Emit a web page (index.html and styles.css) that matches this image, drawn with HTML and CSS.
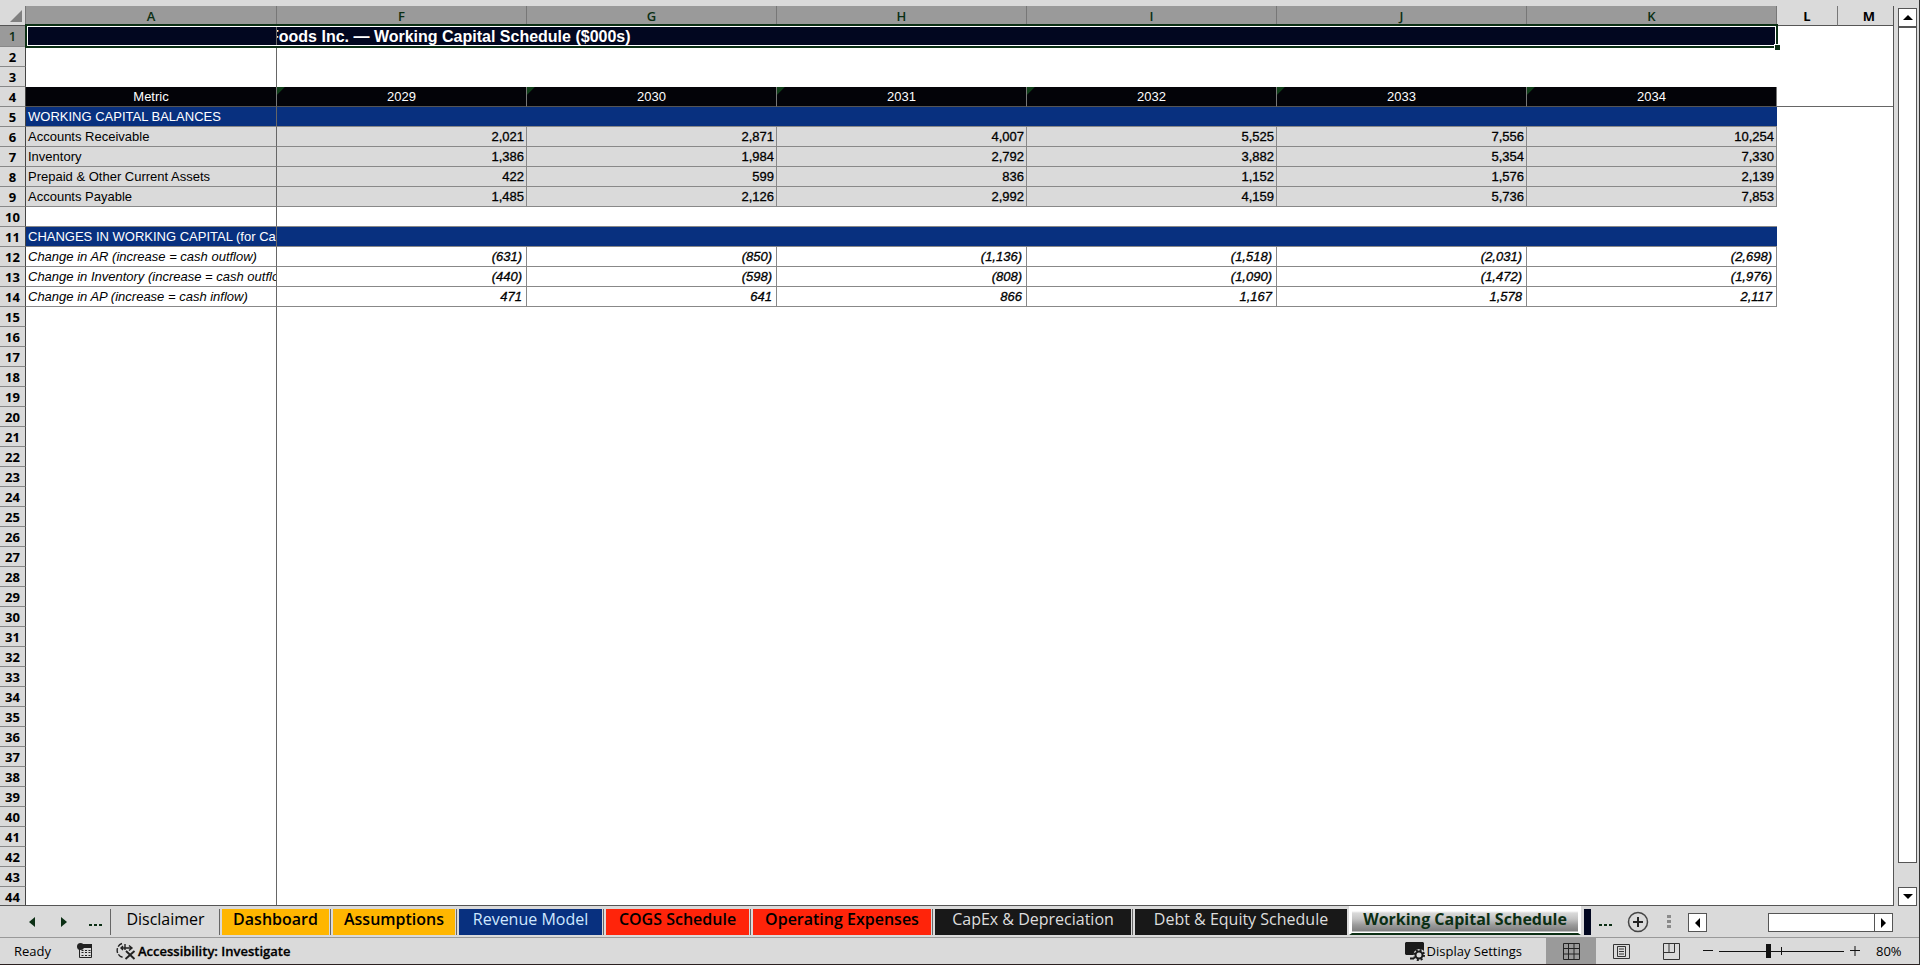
FILE: index.html
```html
<!DOCTYPE html>
<html lang="en">
<head>
<meta charset="utf-8">
<title>Working Capital Schedule</title>
<link rel="stylesheet" href="styles.css">
</head>
<body>
<div class="app">
  <main class="workspace">
    <div class="sheet">
      <table class="grid">
        <colgroup><col class="col-num"><col class="col-a"><col class="col-year"><col class="col-year"><col class="col-year"><col class="col-year"><col class="col-year"><col class="col-year"><col class="col-l"><col></colgroup>
        <thead>
          <tr><th class="corner"><svg width="12" height="12" viewBox="0 0 12 12"><path d="M12 0V12H0Z" fill="#808080"/></svg></th><th class="sel">A</th><th class="sel">F</th><th class="sel">G</th><th class="sel">H</th><th class="sel">I</th><th class="sel">J</th><th class="sel">K</th><th>L</th><th class="last">M</th></tr>
        </thead>
        <tbody id="rows">
          <tr class="title"><th class="sel">1</th><td></td><td colspan="6" class="title-text">Foods Inc. — Working Capital Schedule ($000s)</td></tr>
          <tr><th>2</th><td></td></tr>
          <tr><th>3</th><td></td></tr>
          <tr class="years"><th>4</th><td>Metric</td><td>2029</td><td>2030</td><td>2031</td><td>2032</td><td>2033</td><td>2034</td><td class="freeze" colspan="2"></td></tr>
          <tr class="section"><th>5</th><td>WORKING CAPITAL BALANCES</td><td colspan="6"></td></tr>
          <tr class="balance"><th>6</th><td>Accounts Receivable</td><td>2,021</td><td>2,871</td><td>4,007</td><td>5,525</td><td>7,556</td><td>10,254</td></tr>
          <tr class="balance"><th>7</th><td>Inventory</td><td>1,386</td><td>1,984</td><td>2,792</td><td>3,882</td><td>5,354</td><td>7,330</td></tr>
          <tr class="balance"><th>8</th><td>Prepaid &amp; Other Current Assets</td><td>422</td><td>599</td><td>836</td><td>1,152</td><td>1,576</td><td>2,139</td></tr>
          <tr class="balance"><th>9</th><td>Accounts Payable</td><td>1,485</td><td>2,126</td><td>2,992</td><td>4,159</td><td>5,736</td><td>7,853</td></tr>
          <tr class="spacer"><th>10</th><td></td><td colspan="6"></td></tr>
          <tr class="section"><th>11</th><td>CHANGES IN WORKING CAPITAL (for Cash Flow)</td><td colspan="6"></td></tr>
          <tr class="change"><th>12</th><td>Change in AR (increase = cash outflow)</td><td>(631)</td><td>(850)</td><td>(1,136)</td><td>(1,518)</td><td>(2,031)</td><td>(2,698)</td></tr>
          <tr class="change"><th>13</th><td>Change in Inventory (increase = cash outflow)</td><td>(440)</td><td>(598)</td><td>(808)</td><td>(1,090)</td><td>(1,472)</td><td>(1,976)</td></tr>
          <tr class="change"><th>14</th><td>Change in AP (increase = cash inflow)</td><td>471</td><td>641</td><td>866</td><td>1,167</td><td>1,578</td><td>2,117</td></tr>
        </tbody>
      </table>
      <div class="selection"><i class="handle"></i></div>
    </div>
    <div class="vscroll">
      <button class="arrow" aria-label="Scroll up"><svg width="10" height="5" viewBox="0 0 10 5"><path d="M5 0L10 5H0Z"/></svg></button>
      <div class="vthumb"></div>
      <button class="arrow down" aria-label="Scroll down"><svg width="10" height="5" viewBox="0 0 10 5"><path d="M0 0H10L5 5Z"/></svg></button>
    </div>
  </main>

  <nav class="tabs">
    <div class="tab-nav">
      <button aria-label="Previous sheet"><svg width="6" height="10" viewBox="0 0 6 10"><path d="M6 0V10L0 5Z"/></svg></button>
      <button aria-label="Next sheet"><svg width="6" height="10" viewBox="0 0 6 10"><path d="M0 0V10L6 5Z"/></svg></button>
      <button class="more" aria-label="More sheets"><svg width="13" height="2" viewBox="0 0 13 2"><path d="M0 0h3v2H0zM5 0h3v2H5zM10 0h3v2h-3z"/></svg></button>
    </div>
    <button class="tab plain w-disclaimer">Disclaimer</button>
    <button class="tab amber w-dashboard">Dashboard</button>
    <button class="tab amber w-assumptions">Assumptions</button>
    <button class="tab blue w-revenue">Revenue Model</button>
    <button class="tab red w-revenue">COGS Schedule</button>
    <button class="tab red w-opex">Operating Expenses</button>
    <button class="tab dark w-capex">CapEx &amp; Depreciation</button>
    <button class="tab dark w-debt">Debt &amp; Equity Schedule</button>
    <button class="tab active">Working Capital Schedule</button>
    <span class="sliver"></span>
    <button class="more-right" aria-label="More sheets"><svg width="13" height="2" viewBox="0 0 13 2"><path d="M0 0h3v2H0zM5 0h3v2H5zM10 0h3v2h-3z"/></svg></button>
    <button class="add" aria-label="New sheet"><svg width="22" height="22" viewBox="0 0 22 22" fill="none" stroke="#444"><circle cx="11" cy="11" r="9.5" stroke-width="1.5"/><path d="M11 6V16M6 11H16" stroke-width="2" stroke="#222"/></svg></button>
    <span class="grip"><svg width="4" height="14" viewBox="0 0 4 14"><path d="M0 0h4v3H0zM0 5h4v3H0zM0 10h4v3H0z" fill="#8a8a8a"/></svg></span>
    <div class="hscroll">
      <button class="arrow" aria-label="Scroll left"><svg width="5" height="10" viewBox="0 0 5 10"><path d="M5 0V10L0 5Z"/></svg></button>
      <div class="hthumb"></div>
      <button class="arrow" aria-label="Scroll right"><svg width="5" height="10" viewBox="0 0 5 10"><path d="M0 0V10L5 5Z"/></svg></button>
    </div>
  </nav>

  <footer class="status">
    <span class="ready">Ready</span>
    <button class="macro" aria-label="Record macro"><svg width="16" height="16" viewBox="0 0 16 16"><path d="M2.500 6V14.500H14.500V2" fill="none" stroke="#222"/><path d="M6 1H15V5H6Z" fill="#222"/><circle cx="3.500" cy="3.500" r="3.500" fill="#222"/><path d="M4.500 7.500h9M4.500 9.500h9M4.500 12.500h9" stroke="#222" stroke-dasharray="2 1.500"/></svg></button>
    <button class="access"><svg width="20" height="18" viewBox="0 0 20 18" fill="none" stroke="#222" stroke-width="1.400"><path d="M6 1.500A7.200 7.200 0 0 0 8 15.500" stroke-dasharray="5 1.500"/><path d="M5 6H16M9 2V8M13 3.500l3 2.500-3 2.500M7 4l-2 2 2 2"/><path d="M10 9L18.500 17M18.500 9L9.500 17" stroke-width="1.900"/></svg><b>Accessibility: Investigate</b></button>
    <button class="display"><svg width="20" height="19" viewBox="0 0 20 19"><path d="M1 0H18L19 1V9A6 6 0 0 0 8.500 13H1L0 12V1Z" fill="#1a1a1a"/><path d="M5 16.500H9" stroke="#1a1a1a" stroke-width="2"/><circle cx="14" cy="13" r="3.500" fill="none" stroke="#1a1a1a" stroke-width="2"/><circle cx="14" cy="13" r="5" fill="none" stroke="#1a1a1a" stroke-width="2" stroke-dasharray="2 1.930"/></svg>Display Settings</button>
    <button class="view on" aria-label="Normal"><svg width="17" height="17" viewBox="0 0 17 17" fill="none" stroke="#222"><path d="M.500 .500H16.500V16.500H.500ZM5.500 .500V16.500M11 .500V16.500M.500 5.500H16.500M.500 11H16.500"/></svg></button>
    <button class="view" aria-label="Page layout"><svg width="17" height="17" viewBox="0 0 17 17" fill="none" stroke="#333"><path d="M.500 1.500H16.500V15.500H.500ZM4.500 3.500H12.500V13.500H4.500ZM6 6H11M6 8.500H11M6 11H11"/></svg></button>
    <button class="view" aria-label="Page break preview"><svg width="17" height="17" viewBox="0 0 17 17" fill="none" stroke="#333"><path d="M.500 .500H16.500V16.500H.500ZM.500 9.500H11.500V.500M6 .500V9.500"/></svg></button>
    <div class="zoom">
      <button aria-label="Zoom out"><svg width="10" height="10" viewBox="0 0 10 10"><path d="M0 4.500H10" stroke="#111"/></svg></button>
      <input class="range" type="range" min="0" max="100" value="39" aria-label="Zoom level">
      <button aria-label="Zoom in"><svg width="10" height="10" viewBox="0 0 10 10"><path d="M0 4.500H10M5 0V10" stroke="#111"/></svg></button>
    </div>
    <span class="pct">80%</span>
  </footer>
</div>
<script src="rows.js"></script>
</body>
</html>
```
FILE: rows.js
```js
// Fill the sheet with blank rows below the data.
const body = document.getElementById("rows");
for (let n = 15; n <= 44; n++) {
  const row = body.insertRow();
  const head = document.createElement("th");
  head.textContent = n;
  row.append(head);
  row.insertCell();
}
```
FILE: styles.css
```css
* { box-sizing: border-box; }
body { margin: 0; font-family: "Open Sans", "Noto Sans", sans-serif; font-size: 12px; color: #000; background: #dadada; }
button { font: inherit; color: inherit; background: none; border: 0; padding: 0; margin: 0; display: flex; align-items: center; justify-content: center; flex: none; }
svg { display: block; flex: none; }
.app { display: flex; flex-direction: column; height: 100vh; overflow: hidden; border-right: 1px solid #333; border-bottom: 1px solid #2a2020; }
.workspace { flex: 1; min-height: 0; display: flex; padding-top: 6px; }
.sheet { position: relative; flex: 1; min-width: 0; overflow: hidden; border-right: 1px solid #555; border-bottom: 1px solid #555; background: #fff; }

.grid { table-layout: fixed; width: 100%; border-collapse: separate; border-spacing: 0; font-family: "Liberation Sans", Arial, sans-serif; font-size: 13px; }
.col-num { width: 26px; }
.col-a { width: 251px; }
.col-year { width: 250px; }
.col-l { width: 61px; }
.grid tr { height: 20px; }
.grid th, .grid td { padding: 0; line-height: 18px; white-space: nowrap; overflow: hidden; }
.grid th { font-family: "Open Sans", "Noto Sans", sans-serif; font-size: 13px; font-weight: 700; background: #dadada; text-align: center; border-right: 1px solid #444; border-bottom: 1px solid #888; }
.grid thead tr { height: 20px; }
.grid thead th { border-right: 1px solid #777; border-bottom: 1px solid #555; }
.grid thead .sel { background: #9a9a9a; color: #0b2f14; font-weight: 600; }
.grid thead .last { border-right: 0; padding-left: 7px; }
.grid thead .corner svg { margin: 0 3px 0 auto; }
.grid tbody .sel { background: #9a9a9a; color: #0b2f14; font-weight: 600; }
.grid td:nth-child(2) { border-right: 1px solid #666; }
.grid .title { height: 21px; }
.title td { background: #020720; color: #fff; }
.grid .title-text { font-size: 16px; font-weight: 700; text-indent: -8px; }
.grid .years td { background: #030308; color: #fff; text-align: center; border-right: 1px solid #777; border-bottom: 1px solid #555; }
.grid .years td:nth-child(n+3) { background: linear-gradient(135deg, #0f3d18 5px, #030308 6px); }
.grid .years .freeze:nth-child(n+3) { background: none; border-right: 0; border-bottom: 1px solid #666; }
.grid .section td { background: #08307f; color: #fff; border-bottom: 1px solid #888; padding-left: 2px; }
.balance td { background: #dadada; }
.balance td, .change td { border-right: 1px solid #888; border-bottom: 1px solid #888; text-align: right; }
.balance td:nth-child(n+3), .change td:nth-child(n+3) { padding-right: 2px; -webkit-text-stroke: 0.3px #000; }
.grid .balance td:nth-child(2), .grid .change td:nth-child(2) { text-align: left; padding-left: 2px; }
.change td { font-style: italic; }
.grid .change td:nth-child(n+3) { padding-right: 4px; }
.spacer td:nth-child(n+2) { border-bottom: 1px solid #888; }

.selection { position: absolute; left: 25px; top: 18px; width: 1753px; height: 24px; border: 2px solid #0b2f14; outline: 1px solid #fff; outline-offset: -3px; }
.handle { position: absolute; right: -4px; bottom: -4px; width: 6px; height: 6px; background: #0b2f14; border-top: 1px solid #fff; border-left: 1px solid #fff; }

.vscroll { width: 25px; padding: 2px 2px 0 4px; display: flex; flex-direction: column; }
.arrow { width: 19px; height: 19px; background: #fff; border: 1px solid #555; }
.vthumb { height: 836px; flex: 0 1 836px; background: #fff; border: 1px solid #555; }
.down { margin-top: auto; }

.tabs { height: 32px; display: flex; align-items: flex-start; padding-top: 2px; font-size: 16px; border-bottom: 1px solid #999; }
.tab-nav { display: flex; align-items: center; gap: 26px; width: 112px; height: 28px; padding-left: 29px; }
.tab-nav svg, .more-right svg { fill: #0b2f14; }
.tab-nav .more { margin-left: -4px; padding-top: 6px; }
.tab { height: 26px; padding-bottom: 6px; margin: 1px 2px 0 2px; box-shadow: -2px 0 0 #dadada, -3px 0 0 #666; }
.plain { margin-left: 1px; }
.amber { background: #ffb600; font-weight: 600; }
.blue { background: #08307f; color: #cfe8ff; }
.red { background: #ff240a; font-weight: 600; }
.dark { background: #181818; color: #dedede; }
.w-disclaimer { width: 105px; }
.w-dashboard { width: 107px; }
.w-assumptions { width: 122px; }
.w-revenue { width: 143px; }
.w-opex { width: 178px; }
.w-capex { width: 196px; }
.w-debt { width: 212px; }
.active { width: 232px; height: 29px; margin: -2px 0 0; padding-bottom: 4px; font-weight: 700; color: #0b2f14; border: 3px solid #fff; border-bottom: 2px solid #0b2f14; background: linear-gradient(#fff 2px, #dadada 4px, #c4c4c4 10px, #9a9a9a 16px, #808080 22px, #fff 23px); box-shadow: none; }
.sliver { width: 7px; height: 26px; margin: 1px 8px 0 3px; background: #020720; }
.more-right { height: 28px; padding-top: 6px; }
.add { height: 28px; margin-left: 15px; }
.grip { margin: 7px 17px 0 18px; }
.hscroll { flex: 1; display: flex; margin: 5px 26px 0 0; }
.hthumb { width: 106px; height: 19px; margin-left: auto; background: #fff; border: 1px solid #555; border-right: 0; }

.status { height: 26px; display: flex; align-items: center; font-size: 13px; }
.ready { margin-left: 14px; width: 63px; }
.macro { margin-right: 23px; }
.access b { font-weight: 600; margin-left: 2px; -webkit-text-stroke: 0.3px #000; }
.display { margin-left: auto; margin-right: 24px; gap: 2px; }
.view { width: 50px; height: 26px; }
.on { background: #9a9a9a; }
.zoom { display: flex; align-items: center; gap: 6px; margin-left: 7px; }
.range { appearance: none; width: 125px; height: 16px; margin: 0; background: linear-gradient(#111, #111) 62px 4px / 1px 8px no-repeat, linear-gradient(#111, #111) 0 8px / 100% 1px no-repeat; }
.range::-webkit-slider-thumb { appearance: none; width: 5px; height: 14px; background: #111; }
.pct { width: 59px; padding-left: 16px; }
```
